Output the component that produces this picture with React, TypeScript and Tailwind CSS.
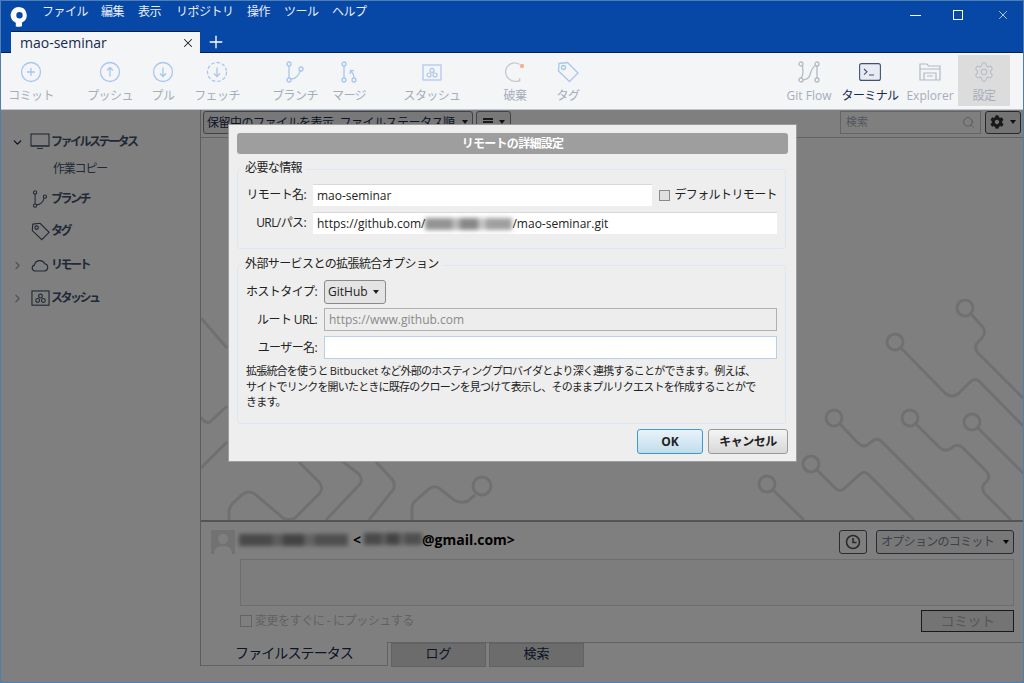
import {ReactNode} from "react";
import {ChevronDown, ChevronRight, Plus, Search, Settings, X} from "lucide-react";
import {FaCog} from "react-icons/fa";

const blue = "#a9c6ee"
const grey = "#b4bac4"

const Ring = ({children, dashed}: {children: ReactNode, dashed?: boolean}) => (
    <svg width="22" height="22" viewBox="0 0 22 22" fill="none" stroke={blue} strokeWidth="1.3">
        <circle cx="11" cy="11" r="9.5" strokeDasharray={dashed ? "3.5 2" : undefined}/>
        {children}
    </svg>
)

const CommitIcon = () => <Ring><path d="M11 7v8M7 11h8"/></Ring>
const PushIcon = () => <Ring><path d="M11 15.5V7M8 9.5 11 6.5l3 3"/></Ring>
const PullIcon = () => <Ring><path d="M11 6.5V15M8 12.5l3 3 3-3"/></Ring>
const FetchIcon = () => <Ring dashed><path d="M11 6.5V15M8 12.5l3 3 3-3"/></Ring>

const BranchIcon = ({color = blue, size = 22}: {color?: string, size?: number}) => (
    <svg width={size} height={size} viewBox="0 0 22 22" fill="none" stroke={color} strokeWidth="1.3">
        <circle cx="5" cy="3" r="2"/>
        <circle cx="5" cy="19" r="2"/>
        <circle cx="17" cy="8" r="2"/>
        <path d="M5 5v12M6.8 18.2C12 17.5 15 14 16 9.8"/>
    </svg>
)

const MergeIcon = () => (
    <svg width="22" height="22" viewBox="0 0 22 22" fill="none" stroke={blue} strokeWidth="1.3">
        <circle cx="6" cy="3" r="2"/>
        <circle cx="6" cy="19" r="2"/>
        <circle cx="16" cy="19" r="2"/>
        <path d="M6 5v12M16 17c0-3-1-5-3-7M12 13l.6-3.6 3.4.2"/>
    </svg>
)

const StashIcon = ({color = blue, size = 20}: {color?: string, size?: number}) => (
    <svg width={size} height={size * 0.85} viewBox="0 0 20 17" fill="none" stroke={color} strokeWidth="1.2">
        <rect x="1" y="1" width="18" height="15"/>
        <circle cx="10" cy="6.4" r="2"/>
        <circle cx="7" cy="11" r="2"/>
        <circle cx="13" cy="11" r="2"/>
    </svg>
)

const DiscardIcon = () => (
    <svg width="22" height="22" viewBox="0 0 22 22" fill="none" stroke="#c4c8ce" strokeWidth="1.3">
        <path d="M15.5 3.4A9 9 0 0 0 5 18M5 18c3 2.5 7 3 10.5 1.5M15.6 17.2l.2 2.6-2.6.5"/>
        <circle cx="18" cy="5" r="2.2" fill="#f6b093" stroke="none"/>
    </svg>
)

const TagIcon = ({color = blue, size = 22}: {color?: string, size?: number}) => (
    <svg width={size} height={size} viewBox="0 0 22 22" fill="none" stroke={color} strokeWidth="1.3">
        <path d="M2 2.5 10.5 1.5 21 12l-8.5 8.5L1.5 10z"/>
        <circle cx="6.5" cy="6.5" r="2"/>
    </svg>
)

const GitFlowIcon = () => (
    <svg width="22" height="22" viewBox="0 0 22 22" fill="none" stroke={grey} strokeWidth="1.3">
        <circle cx="3" cy="3" r="2"/>
        <circle cx="3" cy="19" r="2"/>
        <circle cx="19" cy="3" r="2"/>
        <circle cx="19" cy="19" r="2"/>
        <path d="M3 17c3-3 2-8 1.500-12M19 5v12M17.500 4.500C13 7 13 12 11.500 15c-1 2-3 3.500-6.500 4"/>
    </svg>
)

const TerminalIcon = () => (
    <svg width="22" height="18" viewBox="0 0 22 18" fill="#e6ebf4" stroke="#42526e" strokeWidth="1.1">
        <rect x="0.6" y="0.6" width="20.800" height="16.800" rx="2"/>
        <path d="M5 6l3 2.800-3 2.800M10 12h5" fill="none"/>
    </svg>
)

const ExplorerIcon = () => (
    <svg width="22" height="18" viewBox="0 0 22 18" fill="none" stroke={grey} strokeWidth="1.2">
        <path d="M1 17V1h7l1.500 2H21v14z"/>
        <path d="M1 6h20M5 17v-7h12v7M8 13h6"/>
    </svg>
)

const ClockIcon = () => (
    <svg width="16" height="16" viewBox="0 0 16 16" fill="none" stroke="#555" strokeWidth="1.600">
        <circle cx="8" cy="8" r="6.500"/>
        <path d="M8 4v4.500h3.500"/>
    </svg>
)

const Caret = ({className = "border-t-[#222]"}: {className?: string}) => (
    <span className={`block shrink-0 w-0 h-0 border-x-[3.5px] border-x-transparent border-t-[4px] ${className}`}/>
)

const ToolItem = ({label, icon, className, dark, latin}: {label: string, icon: ReactNode, className: string, dark?: boolean, latin?: boolean}) => (
    <div className={`flex flex-col items-center shrink-0 h-[51px] ${className}`}>
        <div className="h-[28px] mt-[3px] flex items-center justify-center">{icon}</div>
        <span className={`mt-[2px] text-[12px] leading-[16px] whitespace-nowrap ${latin ? '' : 'tracking-[-0.6px]'} ${dark ? 'text-[#172b4d]' : 'text-[#a5adba]'}`}>{label}</span>
    </div>
)

const Toolbar = () => (
    <div className="flex bg-[#f4f5f7] h-[57px] pt-[2px] border-b border-b-[#c1c7d0]">
        <ToolItem label="コミット" icon={<CommitIcon/>} className="w-[60px]"/>
        <ToolItem label="プッシュ" icon={<PushIcon/>} className="w-[62px] ml-[18px]"/>
        <ToolItem label="プル" icon={<PullIcon/>} className="w-[44px]"/>
        <ToolItem label="フェッチ" icon={<FetchIcon/>} className="w-[64px]"/>
        <ToolItem label="ブランチ" icon={<BranchIcon/>} className="w-[62px] ml-[15px]"/>
        <ToolItem label="マージ" icon={<MergeIcon/>} className="w-[46px]"/>
        <ToolItem label="スタッシュ" icon={<StashIcon/>} className="w-[64px] ml-[28px]"/>
        <ToolItem label="破棄" icon={<DiscardIcon/>} className="w-[40px] ml-[31px]"/>
        <ToolItem label="タグ" icon={<TagIcon/>} className="w-[40px] ml-[13px]"/>
        <div className="ml-auto flex pr-[13px]">
            <ToolItem label="Git Flow" icon={<GitFlowIcon/>} className="w-[58px]" latin/>
            <ToolItem label="ターミナル" icon={<TerminalIcon/>} className="w-[64px]" dark/>
            <ToolItem label="Explorer" icon={<ExplorerIcon/>} className="w-[56px]" latin/>
            <ToolItem label="設定" icon={<Settings size={22} strokeWidth={1.1} color={grey}/>} className="w-[52px] bg-[#dcdcdc]"/>
        </div>
    </div>
)

const menu = [
    {name: "ファイル", cls: "w-[59px]"},
    {name: "編集", cls: "w-[37px]"},
    {name: "表示", cls: "w-[38px]"},
    {name: "リポジトリ", cls: "w-[71px]"},
    {name: "操作", cls: "w-[37px]"},
    {name: "ツール", cls: "w-[48px]"},
    {name: "ヘルプ", cls: "w-[48px]"},
]

const TitleBar = () => (
    <div className="bg-[#0747a6] h-[52px] flex flex-col border-b border-b-[#0a1f44]">
        <div className="flex items-center h-[30px] shrink-0">
            <svg className="ml-[9px] mt-[2px] shrink-0" width="17" height="20" viewBox="0 0 17 20">
                <path fill="#fff" fillRule="evenodd" d="M8.500 0a8.200 8.200 0 0 1 3.500 15.600V19c0 .6-3.500 1.300-6.200.4V15.800A8.200 8.200 0 0 1 8.500 0zm1 5a3.200 3.200 0 1 0 0 6.400 3.200 3.200 0 0 0 0-6.400z"/>
            </svg>
            <div className="flex ml-[15px] mt-[-8px]">
                {menu.map(m => <span key={m.name} className={`text-[12px] leading-[16px] text-[#e8eefa] tracking-[-0.5px] ${m.cls}`}>{m.name}</span>)}
            </div>
            <div className="ml-auto flex items-center text-white mt-[-2px]">
                <span className="w-[11px] h-[1px] bg-white mr-[32px]"/>
                <span className="w-[10px] h-[10px] border border-white mr-[33px]"/>
                <X size={14} strokeWidth={1.2} className="mr-[13px]"/>
            </div>
        </div>
        <div className="flex items-end flex-1">
            <div className="ml-[10px] w-[189px] h-[22px] mb-[-1px] bg-[#f4f5f7] border-t border-t-[#0a1f44] flex items-center pl-[9px] pr-[5px] relative z-10">
                <span className="text-[14px] text-[#172b4d] leading-[18px]">mao-seminar</span>
                <X size={14} strokeWidth={1.8} className="ml-auto text-[#222]"/>
            </div>
            <Plus size={20} strokeWidth={1.6} className="ml-[6px] text-white"/>
        </div>
    </div>
)

const SideRow = ({label, icon, caret}: {label: string, icon: ReactNode, caret?: ReactNode}) => (
    <div className="flex items-center h-[22px]">
        <span className="w-[28px] flex items-center justify-end pr-[5px]">{caret}</span>
        <span className="w-[22px] flex items-center justify-center">{icon}</span>
        <span className="text-[12px] font-bold text-[#42526e] tracking-[-2.5px] whitespace-nowrap">{label}</span>
    </div>
)

const Sidebar = () => (
    <div className="w-[200px] shrink-0 border-r border-r-[#b8b8b8] pt-[21px] flex flex-col">
        <SideRow label="ファイルステータス" caret={<ChevronDown size={13} strokeWidth={2.5} color="#172b4d"/>} icon={
            <svg width="20" height="18" viewBox="0 0 20 18" fill="none" stroke="#42526e" strokeWidth="1.100"><rect x="1" y="1" width="18" height="12"/><path d="M7 15.500h6M1 13h18"/></svg>
        }/>
        <span className="text-[12px] ml-[52px] mt-[8px] h-[16px] leading-[16px] text-[#42526e] tracking-[-1.200px]">作業コピー</span>
        <div className="mt-[11px]"><SideRow label="ブランチ" icon={<BranchIcon color="#42526e" size={18}/>}/></div>
        <div className="mt-[10px]"><SideRow label="タグ" icon={<TagIcon color="#42526e" size={19}/>}/></div>
        <div className="mt-[12px]"><SideRow label="リモート" caret={<ChevronRight size={13} strokeWidth={2} color="#97a0af"/>} icon={
            <svg width="18" height="14" viewBox="0 0 18 14" fill="none" stroke="#42526e" strokeWidth="1.100"><path d="M4 13a3 3 0 0 1-.600-5.900 5.500 5.500 0 0 1 10.400-1.300A3.700 3.700 0 0 1 14 13z"/></svg>
        }/></div>
        <div className="mt-[11px]"><SideRow label="スタッシュ" caret={<ChevronRight size={13} strokeWidth={2} color="#97a0af"/>} icon={<StashIcon color="#42526e" size={19}/>}/></div>
    </div>
)

const FilterBar = () => (
    <div className="h-[28px] shrink-0 border-b border-b-[#c4c4c4] flex items-center pl-[2px] pr-[2px] pb-[3px]">
        <div className="w-[270px] h-[23px] border border-[#7a869a] rounded-[3px] flex items-center pl-[3px] pr-[4px] bg-[#f0f0f0]">
            <span className="text-[12px] text-[#172b4d] tracking-[-0.500px] whitespace-nowrap overflow-hidden pt-[1px]">保留中のファイルを表示<span className="ml-[6px]">ファイルステータス順</span></span>
            <span className="ml-auto"><Caret/></span>
        </div>
        <div className="ml-[3px] w-[35px] h-[23px] border border-[#7a869a] rounded-[3px] flex items-center justify-center gap-[6px] bg-[#f0f0f0]">
            <span className="w-[10px] h-[8px] border-y-2 border-y-[#333] relative after:content-[''] after:absolute after:left-0 after:right-0 after:top-[1px] after:h-[2px] after:bg-[#333]"/>
            <Caret/>
        </div>
        <div className="ml-auto w-[141px] h-[23px] border border-[#c8c8c8] flex items-center px-[5px]">
            <span className="text-[11px] text-[#a5adba]">検索</span>
            <Search size={13} strokeWidth={1.6} color="#a5adba" className="ml-auto"/>
        </div>
        <div className="ml-[4px] w-[36px] h-[23px] border border-[#505050] rounded-[3px] flex items-center justify-center gap-[6px] bg-[#e8e8e8]">
            <FaCog size={14} color="#333"/>
            <Caret/>
        </div>
    </div>
)

// 背景の回路パターン
const Circuit = () => (
    <svg className="absolute inset-0" width="822" height="382" viewBox="202 138 822 382" fill="none" stroke="#dee0e3" strokeWidth="3">
        <circle cx="835" cy="418" r="8"/>
        <path d="M841 424 859 443Q865 449 871 443L875 440Q878 438 882 441L961 520"/>
        <circle cx="911" cy="418" r="8"/>
        <path d="M917 424 940 447Q945 452 951 449L955 446Q960 444 964 448L987 471Q992 476 988 481L985 484Q982 489 986 494L1012 520"/>
        <circle cx="973" cy="422" r="8"/>
        <path d="M979 428 1024 473"/>
        <circle cx="812" cy="464" r="8"/>
        <path d="M818 470 836 488Q841 493 846 488L860 475Q865 470 870 475L915 520"/>
        <circle cx="768" cy="484" r="8"/>
        <path d="M774 490 805 520"/>
        <circle cx="966" cy="308" r="8"/>
        <path d="M972 314 983 326Q988 332 983 338L979 342Q974 347 979 353L1024 398"/>
        <circle cx="896" cy="342" r="8"/>
        <path d="M902 348 946 393Q953 399 960 393L971 382Q976 377 981 382L1024 426"/>
        <path d="M202 318l26 30M202 417q4 7 9 5l17-16M202 468l26-26"/>
        <path d="M230 520v-8q0-5 4-9l10-9q6-4 12 0l28 24q6 3 12 0l24-24q5-6 0-12l-20-20"/>
        <path d="M327 520l34-36q3-5-1-10l-17-13"/>
        <path d="M370 520l24-30q3-6-1-11l-16-17"/>
        <path d="M413 520v-12q0-4 3-7l14-12q5-4 10-1l15 12q7 4 14 1l7-6"/>
        <circle cx="483" cy="486" r="9"/>
    </svg>
)

const Blurred = ({className}: {className: string}) => (
    <span className={`inline-flex shrink-0 h-[12px] blur-[2px] opacity-70 ${className}`}>
        <span className="flex-[3] bg-[#666]"/>
        <span className="flex-[1] bg-[#999]"/>
        <span className="flex-[2] bg-[#555]"/>
        <span className="flex-[1] bg-[#aaa]"/>
        <span className="flex-[3] bg-[#777]"/>
    </span>
)

const CommitArea = () => (
    <div className="h-[122px] shrink-0 border-t-2 border-t-[#a8a8a8] relative pl-[10px] pr-[9px] pt-[8px]">
        <div className="flex items-center h-[24px]">
            <svg className="shrink-0" width="24" height="24" viewBox="0 0 24 24">
                <rect width="24" height="24" fill="#e4e4e4"/>
                <circle cx="12" cy="9" r="5" fill="#fff"/>
                <path d="M3 24c0-6 4-8 9-8s9 2 9 8z" fill="#fff"/>
            </svg>
            <Blurred className="w-[109px] ml-[4px] mb-[4px]"/>
            <span className="ml-[5px] mb-[6px] text-[14px] font-bold text-black">&lt;</span>
            <Blurred className="w-[58px] ml-[3px] mb-[6px]"/>
            <span className="mb-[6px] text-[14px] font-bold text-black">@gmail.com&gt;</span>
            <div className="ml-auto w-[28px] h-[24px] border border-[#505a66] rounded-[3px] flex items-center justify-center">
                <ClockIcon/>
            </div>
            <div className="ml-[9px] w-[138px] h-[24px] border border-[#505a66] rounded-[3px] flex items-center pl-[4px] pr-[4px] bg-[#f0f0f0]">
                <span className="text-[12px] text-[#7a869a] tracking-[-0.700px] whitespace-nowrap">オプションのコミット</span>
                <span className="ml-auto"><Caret className="border-t-[#000]"/></span>
            </div>
        </div>
        <div className="ml-[29px] mt-[5px] h-[47px] border border-[#dcdcdc] bg-[#fafafa]"/>
        <div className="ml-[29px] mt-[4px] flex items-start">
            <span className="mt-[5px] w-[12px] h-[12px] border border-[#c8c8c8] shrink-0"/>
            <span className="ml-[3px] mt-[2px] text-[12px] leading-[18px] text-[#c4c4c4] tracking-[-0.450px]">変更をすぐに - にプッシュする</span>
            <div className="ml-auto w-[93px] h-[22px] border border-[#333] bg-[#e8e8e8] flex items-center justify-center pb-[1px] text-[14px] tracking-[-0.500px] text-[#a5adba]">コミット</div>
        </div>
    </div>
)

const Tabs = () => (
    <div className="flex h-[24px] shrink-0">
        <div className="w-[187px] border-b border-r border-[#c4c4c4] flex items-center justify-center pb-[3px] text-[14px] text-[#172b4d] tracking-[-0.900px]">ファイルステータス</div>
        <div className="flex-1 border-t border-t-[#c4c4c4] flex pl-[3px] gap-[3px]">
            <div className="w-[95px] h-[24px] border border-[#c4c4c4] bg-[#d8d8d8] flex items-center justify-center pb-[3px] text-[13px] text-[#172b4d]">ログ</div>
            <div className="w-[95px] h-[24px] border border-[#c4c4c4] bg-[#d8d8d8] flex items-center justify-center pb-[3px] text-[13px] text-[#172b4d]">検索</div>
        </div>
    </div>
)

const Field = ({label, width, children}: {label: string, width: string, children: ReactNode}) => (
    <div className="flex items-center">
        <span className={`text-[12px] text-right text-[#222] tracking-[-0.600px] whitespace-nowrap shrink-0 pr-[7px] ${width}`}>{label}</span>
        {children}
    </div>
)

const Group = ({title, className, children}: {title: string, className: string, children: ReactNode}) => (
    <div className={`relative border border-[#dbe8f3] rounded-[3px] ${className}`}>
        <span className="absolute left-[3px] top-[-10px] bg-[#eeeeee] px-[4px] text-[12px] leading-[16px] text-[#222] tracking-[-0.600px] whitespace-nowrap">{title}</span>
        {children}
    </div>
)

const RemoteDialog = () => (
    <div className="absolute left-[227px] top-[123px] w-[569px] h-[338px] bg-[#eeeeee] border border-[#9c9c9c] px-[8px] pt-[8px] flex flex-col font-['Open_Sans','Noto_Sans_CJK_JP',sans-serif]">
        <div className="h-[21px] shrink-0 rounded-[3px] bg-[#9e9e9e] flex items-center justify-center text-[12px] font-bold text-white tracking-[-0.700px]">リモートの詳細設定</div>
        <Group title="必要な情報" className="mt-[15px] mr-[2px] h-[80px] pl-[8px] pt-[14px] pr-[8px]">
            <Field label="リモート名:" width="w-[67px]">
                <div className="w-[341px] h-[22px] bg-white border-t border-t-[#d8d8d8] flex items-center pl-[4px] text-[12px] text-[#222]">mao-seminar</div>
                <span className="ml-[7px] w-[11px] h-[11px] border border-[#8a8a8a] bg-[#e0e0e0] shrink-0"/>
                <span className="ml-[4px] text-[12px] text-[#222] tracking-[-0.600px] whitespace-nowrap">デフォルトリモート</span>
            </Field>
            <div className="mt-[6px]">
                <Field label="URL/パス:" width="w-[67px]">
                    <div className="flex-1 h-[22px] bg-white border-t border-t-[#d8d8d8] flex items-center pl-[4px] text-[12px] text-[#222]">
                        https://github.com/<Blurred className="w-[87px] opacity-50"/>/mao-seminar.git
                    </div>
                </Field>
            </div>
        </Group>
        <Group title="外部サービスとの拡張統合オプション" className="mt-[16px] mr-[2px] h-[159px] pl-[7px] pt-[14px] pr-[8px]">
            <Field label="ホストタイプ:" width="w-[79px]">
                <div className="w-[62px] h-[24px] border border-[#8a8a8a] rounded-[3px] bg-[#e4e4e4] flex items-center justify-between pl-[3px] pr-[6px] text-[12px] text-[#222]">
                    GitHub<Caret/>
                </div>
            </Field>
            <div className="mt-[4px]">
                <Field label="ルート URL:" width="w-[79px]">
                    <div className="flex-1 h-[23px] bg-[#ededed] border border-[#b0b0b0] flex items-center pl-[4px] text-[12px] text-[#8a8a8a]">https://www.github.com</div>
                </Field>
            </div>
            <div className="mt-[5px]">
                <Field label="ユーザー名:" width="w-[79px]">
                    <div className="flex-1 h-[23px] bg-white border border-[#b5d0e8]"/>
                </Field>
            </div>
            <p className="mt-[4px] ml-[1px] text-[11px] leading-[15.500px] text-[#222] tracking-[-0.800px] whitespace-nowrap">
                拡張統合を使うと <span className="tracking-normal">Bitbucket</span> など外部のホスティングプロバイダとより深く連携することができます。例えば、<br/>
                サイトでリンクを開いたときに既存のクローンを見つけて表示し、そのままプルリクエストを作成することがで<br/>
                きます。
            </p>
        </Group>
        <div className="flex justify-end gap-[5px] mt-[5px]">
            <div className="w-[66px] h-[25px] rounded-[3px] border border-[#3c9ad2] bg-linear-to-b from-[#e8f3fa] to-[#c2dcec] flex items-center justify-center text-[12px] font-bold text-[#222]">OK</div>
            <div className="w-[80px] h-[25px] rounded-[3px] border border-[#9a9a9a] bg-linear-to-b from-[#f4f4f4] to-[#d8d8d8] flex items-center justify-center text-[12px] font-semibold text-[#222] tracking-[-0.500px]">キャンセル</div>
        </div>
    </div>
)

export default function App() {
    return (
        <div className="w-[1024px] h-[683px] relative overflow-hidden border border-[#4e7fb3] bg-white flex flex-col font-['Open_Sans','Noto_Sans_CJK_JP',sans-serif]">
            <TitleBar/>
            <Toolbar/>
            <div className="flex flex-1 min-h-0 relative">
                <div className="flex flex-col w-full h-[556px]">
                    <div className="flex flex-1 min-h-0">
                        <Sidebar/>
                        <div className="flex-1 flex flex-col min-w-0">
                            <FilterBar/>
                            <div className="flex-1 relative overflow-hidden"><Circuit/></div>
                            <CommitArea/>
                            <Tabs/>
                        </div>
                    </div>
                </div>
                <div className="absolute inset-0 bg-black/50"/>
            </div>
            <RemoteDialog/>
        </div>
    );
}
